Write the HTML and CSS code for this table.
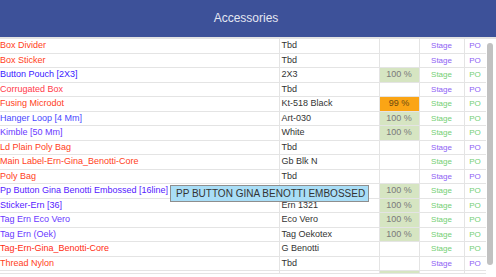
FILE: index.html
```html
<!DOCTYPE html>
<html>
<head>
<meta charset="utf-8">
<link rel="stylesheet" href="styles.css">
</head>
<body>
<div class="panel">
  <div class="header">Accessories</div>
  <div class="body">
    <div class="scroller">
      <table class="grid">
        <colgroup>
          <col class="c-name"><col class="c-desc"><col class="c-pct"><col class="c-stage"><col class="c-po">
        </colgroup>
        <tbody>
          <tr><td class="name red1">Box Divider</td><td class="desc">Tbd</td><td class="pct"></td><td class="stage pur">Stage</td><td class="po pur">PO</td></tr>
          <tr><td class="name red1">Box Sticker</td><td class="desc">Tbd</td><td class="pct"></td><td class="stage pur">Stage</td><td class="po pur">PO</td></tr>
          <tr><td class="name blue1">Button Pouch [2X3]</td><td class="desc">2X3</td><td class="pct done">100 %</td><td class="stage grn">Stage</td><td class="po grn">PO</td></tr>
          <tr><td class="name red2">Corrugated Box</td><td class="desc">Tbd</td><td class="pct"></td><td class="stage pur">Stage</td><td class="po pur">PO</td></tr>
          <tr><td class="name red1">Fusing Microdot</td><td class="desc">Kt-518 Black</td><td class="pct warn">99 %</td><td class="stage grn">Stage</td><td class="po grn">PO</td></tr>
          <tr><td class="name blue2">Hanger Loop [4 Mm]</td><td class="desc">Art-030</td><td class="pct done">100 %</td><td class="stage grn">Stage</td><td class="po grn">PO</td></tr>
          <tr><td class="name blue3">Kimble [50 Mm]</td><td class="desc">White</td><td class="pct done">100 %</td><td class="stage grn">Stage</td><td class="po grn">PO</td></tr>
          <tr><td class="name red1">Ld Plain Poly Bag</td><td class="desc">Tbd</td><td class="pct"></td><td class="stage pur">Stage</td><td class="po pur">PO</td></tr>
          <tr><td class="name red1">Main Label-Ern-Gina_Benotti-Core</td><td class="desc">Gb Blk N</td><td class="pct"></td><td class="stage grn">Stage</td><td class="po grn">PO</td></tr>
          <tr><td class="name red1">Poly Bag</td><td class="desc">Tbd</td><td class="pct"></td><td class="stage pur">Stage</td><td class="po pur">PO</td></tr>
          <tr><td class="name blue4">Pp Button Gina Benotti Embossed [16line]</td><td class="desc"></td><td class="pct done">100 %</td><td class="stage grn">Stage</td><td class="po grn">PO</td></tr>
          <tr><td class="name blue4">Sticker-Ern [36]</td><td class="desc">Ern 1321</td><td class="pct done">100 %</td><td class="stage grn">Stage</td><td class="po grn">PO</td></tr>
          <tr><td class="name blue3">Tag Ern Eco Vero</td><td class="desc">Eco Vero</td><td class="pct done">100 %</td><td class="stage grn">Stage</td><td class="po grn">PO</td></tr>
          <tr><td class="name blue3">Tag Ern (Oek)</td><td class="desc">Tag Oekotex</td><td class="pct done">100 %</td><td class="stage grn">Stage</td><td class="po grn">PO</td></tr>
          <tr><td class="name red3">Tag-Ern-Gina_Benotti-Core</td><td class="desc">G Benotti</td><td class="pct"></td><td class="stage grn">Stage</td><td class="po grn">PO</td></tr>
          <tr><td class="name red1">Thread Nylon</td><td class="desc">Tbd</td><td class="pct"></td><td class="stage pur">Stage</td><td class="po pur">PO</td></tr>
          <tr class="next"><td class="name"></td><td class="desc"></td><td class="pct done"></td><td class="stage"></td><td class="po"></td></tr>
        </tbody>
      </table>
    </div>
    <div class="scrollbar"><div class="thumb"></div></div>
  </div>
  <div class="tooltip">PP BUTTON GINA BENOTTI EMBOSSED</div>
</div>
</body>
</html>
```

FILE: styles.css
```css
html, body {
  margin: 0;
  padding: 0;
  background: #ffffff;
  font-family: "Liberation Sans", Arial, sans-serif;
}

.panel {
  position: relative;
  width: 496px;
  height: 277px;
  overflow: hidden;
}

.header {
  height: 39px;
  box-sizing: border-box;
  background: #3d5199;
  color: #e4e7f2;
  font-size: 12px;
  display: flex;
  align-items: center;
  justify-content: center;
  padding-right: 4px;
  padding-bottom: 1px;
  border-bottom: 2px solid #e3e3e3;
}

.body {
  display: flex;
  height: 238px;
}

.scroller {
  width: 486px;
  height: 238px;
  overflow: hidden;
}

.scrollbar {
  width: 10px;
  height: 238px;
  box-sizing: border-box;
  padding: 4px 3px 12px 1px;
  background: #ffffff;
}

.thumb {
  height: 100%;
  background: #c1c1c1;
  border-radius: 3px;
}

.grid {
  width: 486px;
  border-collapse: collapse;
  table-layout: fixed;
}

.c-name { width: 279px; }
.c-desc { width: 100px; }
.c-pct { width: 40px; }
.c-stage { width: 45px; }
.c-po { width: 22px; }

.grid td {
  border: 1px solid #e4e4e4;
  padding: 1px 2px;
  line-height: 11.5px;
  font-size: 9px;
  white-space: nowrap;
  overflow: hidden;
  vertical-align: middle;
}

.grid tr:first-child td { border-top: none; }
.grid td.name {
  border-left: none;
  padding-left: 0;
}
.grid td.desc {
  color: #333333;
  padding-left: 2px;
}

.grid tr.next td { border-top-color: #e2dcf0; }

.red1 { color: #ff4022; }
.red2 { color: #ff3a4a; }
.red3 { color: #ff2a12; }
.blue1 { color: #3a18ff; }
.blue2 { color: #4a48ff; }
.blue3 { color: #6a38ff; }
.blue4 { color: #5520ff; }

.grid td.pct {
  text-align: center;
  color: #7a7a7a;
}
.grid td.done { background: #d6e5c2; }
.grid td.warn { background: #fba515; color: #6a4a10; }

.grid td.stage,
.grid td.po {
  text-align: center;
  font-size: 8px;
}
.pur { color: #8e62f4; }
.grn { color: #74cf74; }

.tooltip {
  position: absolute;
  left: 170px;
  top: 185px;
  width: 199px;
  height: 17px;
  box-sizing: border-box;
  background: #a9def7;
  border: 1px solid #8e8e8e;
  color: #333333;
  font-size: 10px;
  line-height: 15px;
  padding-left: 5px;
  white-space: nowrap;
}
```
